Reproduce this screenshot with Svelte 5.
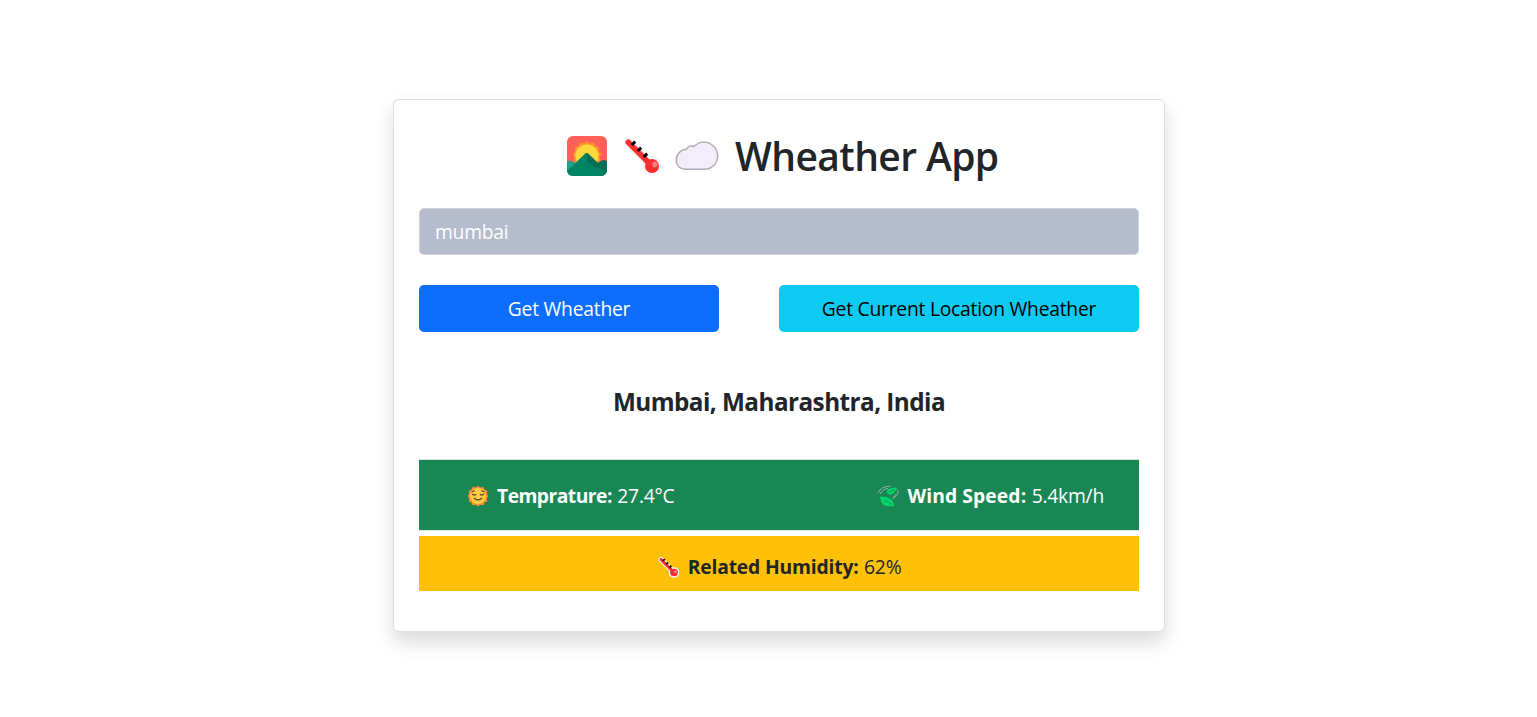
<script>
  let city = $state('mumbai');
</script>

{#snippet thermometer(cls)}
  <svg class={cls} viewBox="0 0 40 40" aria-hidden="true">
    <path d="M7.3 6.3 30 29" stroke="#f4f4f6" stroke-width="9.5" stroke-linecap="round" />
    <circle cx="31" cy="30" r="9.7" fill="#f4f4f6" />
    <path d="M7.3 6.3 30 29" stroke="#ff2d2d" stroke-width="5.6" stroke-linecap="round" />
    <circle cx="31" cy="30" r="7" fill="#ff2d2d" />
    <circle cx="33.8" cy="28.4" r="2.8" fill="#ff7d7d" />
    <path d="m10.8 9 3.4-3.4M16.8 15l3.4-3.4M22.8 21l3.4-3.4" stroke="#080808" stroke-width="3" />
  </svg>
{/snippet}

<main class="card">
  <h1>
    <svg class="icon-sunrise" viewBox="0 0 40 40" aria-hidden="true">
      <clipPath id="tile"><rect width="40" height="40" rx="6" /></clipPath>
      <g clip-path="url(#tile)">
        <rect width="40" height="40" fill="#ff6059" />
        <path d="m20 5 3 2.5 3.8-1 1.5 3.6 3.7 1.2-.3 3.9 2.8 2.8-2 3.3 1 3.7-3.3 2H9.8l-3.3-2 1-3.7-2-3.3 2.8-2.8-.3-3.9 3.7-1.2 1.5-3.6 3.8 1z" fill="#ff9524" />
        <circle cx="20" cy="20" r="11.6" fill="#ffd83d" />
        <path d="M0 26q3-2.4 6 0l7 7v7H0z" fill="#17a589" />
        <path d="m26 30 8-5q3-1.6 6 1v14H25z" fill="#007a58" />
        <path d="M0 35 18 17.7q1.6-1.5 3.2 0L40 36v4H0z" fill="#008463" />
        <path d="M19.6 17q1-.1 1.9.9L31 27l4-2.5q2.6-1.4 5 1.2V36l-4-1-5.5-4-3 .5-7-5z" fill="#007154" />
      </g>
    </svg>
    {@render thermometer('icon-thermometer')}
    <svg class="icon-cloud" viewBox="0 0 44 30" aria-hidden="true">
      <path d="M10.5 28.3C5 28.3 1.2 24.4 1.2 19.3 1.2 12.9 6 8.4 11.4 8.2c1.3-2.7 4.6-4 7.4-2.6C21.7 2.7 25 1.1 28.7 1.1c7.8 0 14 6.3 14 13.7 0 7.3-5.6 13.5-13.2 13.5z" fill="#f2edf8" stroke="#b1aabb" stroke-width="1.4" />
    </svg>
    <span>Wheather App</span>
  </h1>

  <input type="text" aria-label="City" bind:value={city} />

  <div class="actions">
    <button class="primary"><span>Get Wheather</span></button>
    <button class="info"><span>Get Current Location Wheather</span></button>
  </div>

  <h2><span>Mumbai, Maharashtra, India</span></h2>

  <div class="row green">
    <p class="temp">
      <svg class="icon-small" viewBox="0 0 22 22" aria-hidden="true">
        <path d="m11 .8 2.4 1.7 3-.6 1.2 2.7 2.8 1.2-.5 3L21.4 11l-1.6 2.4.5 3-2.8 1.2-1.2 2.7-3-.5L11 21.4l-2.4-1.6-3 .5-1.2-2.7-2.7-1.2.5-3L.6 11l1.6-2.3-.5-3 2.7-1.2 1.2-2.7 3 .6z" fill="#ff8b2c" />
        <circle cx="11" cy="11" r="8.1" fill="#ffcc3d" />
        <path d="m5 6.8 2.4-1m7.2 0 2.4 1M5.2 9.2q1.7 1.7 3.6.3m4.4 0q1.9 1.4 3.6-.3M7.3 13.2q3.7 3.4 7.4 0" fill="none" stroke="#593d36" stroke-width="1.2" stroke-linecap="round" />
      </svg>
      <strong>Temprature:</strong><span>27.4°C</span>
    </p>
    <p class="wind">
      <svg class="icon-small" viewBox="0 0 22 22" aria-hidden="true">
        <path d="M1 8.2Q3.8 1 13.5 1.3M3.2 9Q6 3.8 11 3.4M21 4.8q.6 6.4-5.5 9M19 9q-.6 2-3 3" fill="none" stroke="#8dafa3" stroke-width="1" />
        <path d="M20.6 2.8c-5-.5-10.4.6-10.7 3.8-.1 2.3 2.2 3.5 4.7 2.7 3.2-1 3.6-4.1 6-6.5z" fill="#00d66b" />
        <path d="M2.6 12C8 10.8 17 12.5 17 21.2c-4.8.4-9.8.2-12-3.2C3.6 16 3.9 14 2.6 12z" fill="#00d66b" />
        <path d="m11.8 7.2 5.6-2.6M7.5 15.2l7.3 4" stroke="#06894c" stroke-width=".8" />
      </svg>
      <strong>Wind Speed:</strong><span>5.4km/h</span>
    </p>
  </div>
  <div class="row yellow">
    <p class="humidity">
      {@render thermometer('icon-small')}
      <strong>Related Humidity:</strong><span>62%</span>
    </p>
  </div>
</main>

<style>
  :global(body) {
    display: flow-root;
    min-height: 717px;
    background: #fff;
  }
  * {
    box-sizing: border-box;
  }
  .card {
    width: 772px;
    height: 533px;
    margin: 99px 0 0 393px;
    padding: 25px;
    border: 1px solid #dedfe0;
    border-radius: 6px;
    background: #fff;
    box-shadow: 0 10px 20px rgba(0, 0, 0, 0.15);
    color: #212529;
    font: 19.3px/30px 'Open Sans', 'Noto Sans', sans-serif;
    letter-spacing: -0.24px;
  }
  h1 {
    display: flex;
    align-items: center;
    height: 60px;
    margin: 1px 0 0;
    padding-left: 148px;
    font-size: 39px;
    font-weight: 600;
    white-space: nowrap;
  }
  h1 svg {
    flex: none;
  }
  h1 span {
    margin-left: 16.5px;
    letter-spacing: -0.6px;
  }
  svg {
    fill: none;
  }
  .icon-sunrise {
    width: 40px;
    height: 40px;
  }
  .icon-thermometer {
    width: 40px;
    height: 40px;
    margin-left: 13.5px;
  }
  .icon-cloud {
    width: 44px;
    height: 30px;
    margin-left: 14px;
  }
  input {
    display: block;
    width: 100%;
    height: 47px;
    margin-top: 22px;
    padding: 0 15px;
    border: 1px solid #ced4da;
    border-radius: 5px;
    background: #b5bccb;
    color: #fff;
    font: inherit;
    letter-spacing: inherit;
    outline: none;
  }
  .actions {
    display: grid;
    grid-template-columns: 300px 360px;
    gap: 60px;
    margin-top: 30px;
  }
  button {
    height: 47px;
    padding: 0;
    border: 0;
    border-radius: 5px;
    font: inherit;
    letter-spacing: inherit;
    white-space: nowrap;
  }
  .primary {
    background: #0d6efd;
    color: #fff;
  }
  .info {
    background: #0dcaf0;
    color: #000;
  }
  h2 {
    margin: 55px 0 42px;
    font-size: 24.3px;
    line-height: 30px;
    font-weight: 700;
    letter-spacing: -0.55px;
    text-align: center;
  }
  .row {
    display: flex;
  }
  .green {
    justify-content: space-between;
    height: 72px;
    padding: 21px 35px 0 48px;
    border: solid #dee2e6;
    border-width: 1px 0;
    background: #198754;
    color: #fff;
  }
  .yellow {
    justify-content: center;
    height: 55px;
    margin-top: 5px;
    padding-top: 16px;
    background: #ffc107;
  }
  p {
    display: flex;
    align-items: center;
    height: 30px;
    margin: 0;
    white-space: nowrap;
  }
  .icon-small {
    flex: none;
    width: 22px;
    height: 22px;
    margin-right: 8px;
  }
  p span {
    margin-left: 5.5px;
    letter-spacing: -0.25px;
  }
  .temp strong {
    letter-spacing: -0.54px;
  }
  .wind strong {
    letter-spacing: 0.1px;
  }
  .humidity .icon-small,
  .humidity :global(.icon-small) {
    margin-right: 9px;
  }
  .humidity strong {
    letter-spacing: -0.17px;
  }
</style>
